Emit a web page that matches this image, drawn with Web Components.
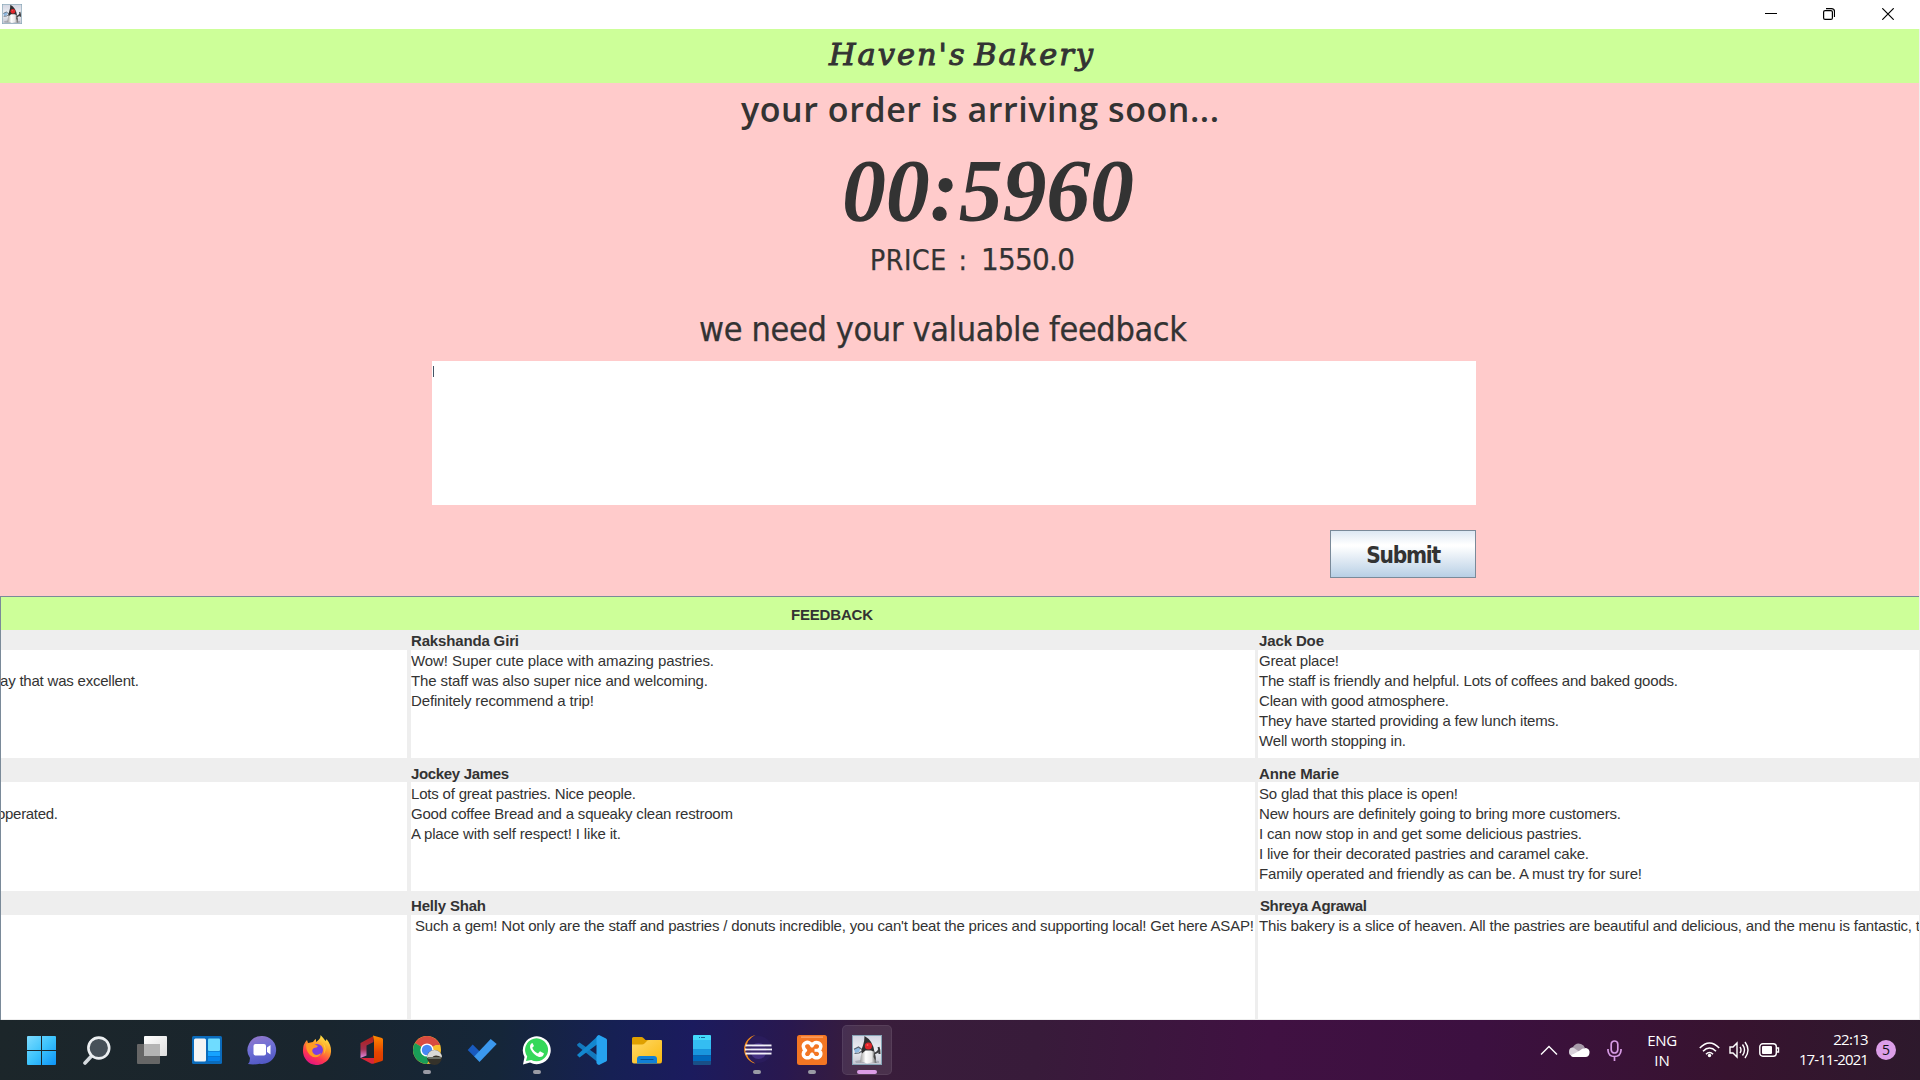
<!DOCTYPE html>
<html lang="en">
<head>
<meta charset="utf-8">
<title>Haven's Bakery</title>
<style>
html,body{margin:0;height:100%;overflow:hidden;background:#eee}
</style>
</head>
<body>
<bakery-desktop></bakery-desktop>
<script>
const define=(name,html,after)=>customElements.define(name,class extends HTMLElement{
  connectedCallback(){
    if(this.shadowRoot)return;
    const t=document.createElement('template');
    t.innerHTML=typeof html==='function'?html(this):html;
    this.attachShadow({mode:'open'}).append(t.content.cloneNode(true));
    if(after)after(this);
  }
});

/* Single line of text whose tracking is adjusted to the advance width in "w". */
define('fit-label',`<style>:host{display:block;white-space:pre;flex:none}span{display:inline-block}</style><span><slot></slot></span>`,el=>{
  const w=parseFloat(el.getAttribute('w'));
  if(!w)return;
  const s=el.shadowRoot.querySelector('span');
  const n=el.textContent.length;
  s.style.letterSpacing=((w-s.getBoundingClientRect().width)/(n-1))+'px';
});

const duke=`<defs><linearGradient id="dk" x1="0" y1="0" x2="0" y2="1"><stop offset="0" stop-color="#d3d6e2"/><stop offset=".5" stop-color="#eeeff4"/><stop offset="1" stop-color="#c3c6d2"/></linearGradient><linearGradient id="db" x1="0" y1="0" x2="1" y2="0"><stop offset="0" stop-color="#999"/><stop offset=".35" stop-color="#fff"/><stop offset=".7" stop-color="#e6e6e6"/><stop offset="1" stop-color="#555"/></linearGradient></defs>
<rect x=".5" y=".5" width="29" height="29" fill="url(#dk)" stroke="#86a5b6"/>
<path d="M3 26q11-3 24 0v2H4z" fill="#a9acb6"/>
<path d="M2 14l4.500-2 2 1.500-1.500 3.500-4 1z" fill="#8fb8e0"/><path d="M2 14.200l4.500-2.200 3.500 2.500M2.500 18.500l4.500-.5 3-2" fill="none" stroke="#5a6470" stroke-width="1.200"/>
<path d="M21 18.500q4.500 0 6-4M26.500 12l.8 3 .2 4" fill="none" stroke="#3a3a3d" stroke-width="2"/>
<path d="M8 27.500Q8.500 21 10.500 14h9.500q3.500 6 3.500 11.500l1 2.500-4.500-.5-5 1-4-1.500z" fill="url(#db)"/>
<path d="M12.500 1Q21 5.500 22.500 17L19 15.500h-5.500L10 18.500Q8.500 16 11 10.500 12.500 6 12.500 1z" fill="#303032"/>
<path d="M22 16q2.500 6 1.500 10l-2-4z" fill="#444"/>
<circle cx="16.400" cy="11" r="3.600" fill="#e0252a"/><circle cx="15.500" cy="9.900" r="1" fill="#f55"/>`;

const icons={
duke,
win:`<defs><linearGradient id="w" x1="0" y1="0" x2="1" y2="1"><stop offset="0" stop-color="#7edcff"/><stop offset=".5" stop-color="#3cc3fc"/><stop offset="1" stop-color="#0d94f7"/></linearGradient></defs><path d="M1 1h13v14H0V2q0-1 1-1zM15 1h13q1 0 1 1v13H15zM0 16h14v14H1q-1 0-1-1zM15 16h14v13q0 1-1 1H15z" fill="url(#w)"/>`,
search:`<path d="M10 20.500L3 28" stroke="#d5dade" stroke-width="3.600" stroke-linecap="round"/><circle cx="16.800" cy="13" r="10.400" fill="#475159" stroke="#eceff1" stroke-width="2.600"/>`,
tasks:`<defs><linearGradient id="t" x1="0" y1="0" x2="1" y2="1"><stop offset="0" stop-color="#fff"/><stop offset="1" stop-color="#ddd"/></linearGradient></defs><rect y="9" width="23" height="20" rx="1" fill="#666"/><rect x="7" y="1" width="23" height="20" rx="1" fill="url(#t)"/><path d="M7 9h16v12H8q-1 0-1-1z" fill="#b4b4b4"/>`,
widgets:`<rect y="1" width="30" height="28" rx="1.500" fill="#0b6bbb"/><rect x="2" y="3.500" width="12" height="23" rx="1.500" fill="#f4f4f4"/><rect x="16" y="3.500" width="12" height="12.500" rx="1" fill="#6fdcff"/><path d="M16 16.500h12V21H16z" fill="#16a3ff"/><path d="M16 21.500h12V25q0 1-1 1h-11z" fill="#0584ee"/>`,
chat:`<defs><linearGradient id="c" x1=".2" y1="0" x2=".5" y2="1"><stop offset="0" stop-color="#9377c9"/><stop offset=".45" stop-color="#6f70d6"/><stop offset="1" stop-color="#5158c4"/></linearGradient></defs><path d="M14.800 1a14 14 0 1 1-2 27.800Q6 30 1 29q2-2 2-6A14 14 0 0 1 14.800 1z" fill="url(#c)"/><rect x="6.500" y="9" width="12.500" height="11.500" rx="2" fill="#fff"/><path d="M20 12.500l3.500-2.500v9.500l-3.500-2.500z" fill="#fff"/>`,
firefox:`<defs><linearGradient id="f" x1=".8" y1="0" x2=".3" y2="1"><stop offset="0" stop-color="#fff04a"/><stop offset=".4" stop-color="#ff9a27"/><stop offset=".72" stop-color="#ff3750"/><stop offset="1" stop-color="#e01285"/></linearGradient></defs><path d="M18.500 0q3 3 5 6 1-1 1-2 5 6 4.500 13A14 14 0 1 1 1 15q0-6 4-10l1 3 5-1q2-3 3-3v3q5-3 4.500-7z" fill="url(#f)"/><circle cx="15" cy="15" r="6" fill="#7b3fe0"/><path d="M4 9q4-2 8 0l4 2q-1 2-4 2-3 2-1 5 3 4 8 0-1 5-8 4-7-3-7-13z" fill="#ff9b23"/><path d="M19.500 7q5 5 2 13 5-8-2-13z" fill="#ffd23b"/>`,
office:`<defs><linearGradient id="o" x1="0" y1="0" x2="0" y2="1"><stop offset="0" stop-color="#b31c13"/><stop offset=".6" stop-color="#a03150"/><stop offset="1" stop-color="#e38ce5"/></linearGradient><linearGradient id="o2" x1="0" y1="0" x2="0" y2="1"><stop offset="0" stop-color="#ff8a00"/><stop offset=".6" stop-color="#e44500"/><stop offset="1" stop-color="#d93a00"/></linearGradient></defs><path d="M3.500 8L16.500 1v6l-7 3.500v10L3.500 23z" fill="url(#o)"/><path d="M16 .5l9 2.500q1 .5 1 1.500v20q0 1-1 1.500l-8 2.500V6z" fill="url(#o2)"/><path d="M3.500 23h13.500v5.500q-1.500.5-3 0z" fill="#d92639"/>`,
chrome:`<g transform="translate(1)"><circle cx="14" cy="15" r="14" fill="#f9bd2d"/><path d="M14 15L1.900 8A14 14 0 0 1 26.100 8z" fill="#d94b40"/><path d="M1.900 8A14 14 0 0 0 14 29l6-10.500-6-3.500z" fill="#199d58"/><path d="M14 8h12.200l.7 2H14z" fill="#d94b40"/><circle cx="14" cy="15" r="6.600" fill="#fff"/><circle cx="14" cy="15" r="5.200" fill="#4688f4"/><circle cx="21.500" cy="22.500" r="7.500" fill="#35322a"/><path d="M14 22.500a7.500 7.500 0 0 1 15 0q-7-4-10 0-2 1-5 0z" fill="#d9dad8"/><path d="M14.500 22h14l-1 2h-12z" fill="#6d7168"/></g>`,
todo:`<g transform="translate(-.8)"><path d="M1.500 15l5-5.500 7 7-5 5.500z" fill="#195abf"/><path d="M8 21.500L24.500 4l6 5-17.200 18z" fill="#3b98ee"/></g>`,
whatsapp:`<path d="M1 29.500l1.500-7.500a14 14 0 1 1 5.500 5.500z" fill="#fff"/><path d="M4 26l1.200-4.500a11.500 11.500 0 1 1 4 3.500z" fill="#35d85a"/><path d="M10 8q-3 2-1.500 6 3 6 8.500 8 4 .5 5-3.500l-4-2.300-2 2.300q-4-1.500-5.700-5.700l1.700-1.800-1.600-3z" fill="#fff"/>`,
vscode:`<path d="M0 9.500L2.500 7.500 23 22v7L.5 11z" fill="#1379be"/><path d="M0 20L22 0v8L2.500 22.500z" fill="#1387cf"/><path d="M22 0l7 3.500q1 .5 1 1.500v20q0 1-1 1.500L22 30q-2-.5-2.500-2V2q.5-1.500 2.500-2z" fill="#26a2ef"/>`,
folder:`<defs><linearGradient id="fo" x1="0" y1="0" x2="1" y2="1"><stop offset="0" stop-color="#ffd968"/><stop offset="1" stop-color="#fab90e"/></linearGradient></defs><path d="M0 3.500Q0 2 1.500 2h8q1 0 2 1l2 2H27v6H0z" fill="#dfa000"/><path d="M0 9.500h10q1.500 0 2.500-1l2-2Q15 5 17 5h12q1 0 1 1v20q0 2.500-2 2.500H2q-2 0-2-2z" fill="url(#fo)"/><path d="M5 28.500V24q0-3 3-3h14q3 0 3 3v4.500z" fill="#1180d6"/><path d="M8.500 24.500h13" stroke="#074f91"/>`,
phone:`<path d="M6 1q0-1 1-1h16q1 0 1 1v5H6z" fill="#43d9fa"/><path d="M6 5h18v9H6z" fill="#34bdf2"/><path d="M6 14h18v6.500H6z" fill="#1996de"/><path d="M6 20.500h18V26H6z" fill="#0069bd"/><path d="M6 26h18v3q0 1-1 1H7q-1 0-1-1z" fill="#194f87"/><path d="M12 2.500h1M14 2.500h4" stroke="#176a98"/>`,
eclipse:`<circle cx="16.500" cy="14.500" r="13.500" fill="#2a1c5c"/><path d="M13.500 0A14.600 14.600 0 0 0 13.500 28.500 15.600 15.600 0 0 1 13.500 0z" fill="#f28b1d"/><circle cx="16.500" cy="16" r="8" fill="#453184"/><path d="M3.500 10.500h26M3 14.500H30M3.500 18.500h26" stroke="#f3f1f8" stroke-width="2"/><path d="M3.500 12.500h26M3.500 16.500h26" stroke="#392769" stroke-width="1.500"/>`,
xampp:`<rect width="30" height="30" rx="2.500" fill="#f37623"/><path d="M4 1.500h22v1.200H4z" fill="#ffab72"/><path d="M15 10.800C13.500 7.200 10.500 6.800 8.300 8 5.300 9.700 6 13.500 8.500 15.300 6 17 5.300 20.500 8.300 22.300c2.500 1.200 5.400.5 6.700-3.100 1.300 3.600 4.200 4.300 6.700 3.100 3-1.800 2.700-5.600-.2-7 2.900-1.800 3.200-5.600.2-7.300C19.500 6.800 16.500 7.200 15 10.800z" fill="none" stroke="#fff" stroke-width="3.500" stroke-linejoin="round"/><path d="M17.500 15.300h4" stroke="#fff" stroke-width="3"/>`
};
define('app-icon',el=>`<style>:host{display:block;flex:none;width:var(--size,30px);height:var(--size,30px)}svg{display:block;width:100%;height:100%}</style><svg viewBox="0 0 30 30">${icons[el.getAttribute('name')]}</svg>`);

define('title-bar',`<style>:host{display:flex;height:29px;background:#fff;align-items:flex-start;justify-content:space-between;box-sizing:border-box;padding:4px 26px 0 2px}
app-icon{--size:20px}svg{display:block}.c{display:flex;padding-top:4px}.c svg+svg{margin-left:46px}.c svg+svg+svg{margin-left:47px}</style>
<app-icon name="duke"></app-icon>
<div class="c"><svg width="12" height="12"><path d="M0 5.500h12" stroke="#000"/></svg>
<svg width="12" height="12" fill="none" stroke="#000" stroke-width="1.200"><rect x=".6" y="2.600" width="8.800" height="8.800" rx="1.500"/><path d="M3 .6h5.500a3 3 0 0 1 3 3V9"/></svg>
<svg width="12" height="12"><path d="M.3.300l11.400 11.400M11.700.3L.3 11.700" stroke="#000" stroke-width="1.200"/></svg></div>`);

define('order-panel',`<style>
:host{display:flex;flex-direction:column;height:567px;background:#ffcbcb;color:#333;margin-right:1px}
.row{display:flex;box-sizing:border-box;flex:none}
.brand{height:54px;background:#cdff99;padding:0 0 0 829px}
.brand fit-label{font:italic 400 30.500px/52px "Lucida Calligraphy","DejaVu Serif",serif;-webkit-text-stroke:1px #333;word-spacing:-4px}
.soon{height:60px;padding-left:741px;font:600 34px/52px "Open Sans",sans-serif}
.time{height:92px;padding-left:842px;font:italic 700 88px/95px "Liberation Serif",serif}
.price{height:70px;padding-left:870px;align-items:baseline;line-height:48px;font-family:"DejaVu Sans Condensed","DejaVu Sans",sans-serif;font-stretch:condensed}
.p1{font-size:28px;width:111px;word-spacing:3px}.p2{font-size:31px}
.p1,.p2,.ask{-webkit-text-stroke:.25px #333}
.ask{height:56px;padding-left:699px;font:34px/49px "DejaVu Sans Condensed","DejaVu Sans",sans-serif;font-stretch:condensed}
.box{margin-left:432px;width:1044px;height:144px;background:#fff;box-sizing:border-box;padding:5px 0 0 1px;flex:none}
.caret{width:1px;height:11px;background:#456}
.act{margin:25px 443px 0 0;justify-content:flex-end}
button{all:unset;display:flex;justify-content:center;box-sizing:border-box;width:146px;height:48px;border:1px solid #7a8a99;background:linear-gradient(#dde8f3,#fff 30%,#fff 33%,#b8cfe5);font:700 22.500px/48px "DejaVu Sans Condensed","DejaVu Sans",sans-serif;font-stretch:condensed}
</style>
<div class="row brand"><fit-label w="264">Haven's Bakery</fit-label></div>
<div class="row soon"><fit-label w="478">your order is arriving soon...</fit-label></div>
<div class="row time"><fit-label w="292">00:5960</fit-label></div>
<div class="row price"><fit-label class="p1" w="97">PRICE :</fit-label><fit-label class="p2" w="94">1550.0</fit-label></div>
<div class="row ask"><fit-label w="488">we need your valuable feedback</fit-label></div>
<div class="box"><div class="caret"></div></div>
<div class="row act"><button><fit-label w="75">Submit</fit-label></button></div>`);

/* name row + note area; lines arrive as slotted fit-labels */
define('review-cell',`<style>
:host{display:flex;flex-direction:column;overflow:hidden;font:15px/20px "Liberation Sans",Arial,sans-serif;color:#333}
.name{height:var(--head,24px);display:flex;align-items:flex-end;font-weight:700;box-sizing:border-box;flex:none}
.name ::slotted(*){height:var(--line,19px)}
.note{flex:1;background:#fff;padding-top:var(--top,1px);overflow:hidden}
.name,.note{padding-left:var(--left,0)}
</style><div class="name"><slot name="who"></slot></div><div class="note"><slot></slot></div>`);

const cell=(who,ww,lines,css='')=>`<review-cell style="${css}">${who?`<fit-label slot="who" w="${ww}">${who}</fit-label>`:''}${lines.map(([t,w,s])=>`<fit-label w="${w}" style="${s||''}">${t}</fit-label>`).join('')}</review-cell>`;
const rows=[
 [cell('',0,[['&nbsp;',0],['ay that was excellent.',139,'margin-left:-1px']]),
  cell('Rakshanda Giri',108,[['Wow! Super cute place with amazing pastries.',303],['The staff was also super nice and welcoming.',297],['Definitely recommend a trip!',183]]),
  cell('Jack Doe',65,[['Great place!',80],['The staff is friendly and helpful. Lots of coffees and baked goods.',419],['Clean with good atmosphere.',190],['They have started providing a few lunch items.',300],['Well worth stopping in.',147]],'--left:1px')],
 [cell('',0,[['&nbsp;',0],['operated.',61,'margin-left:-4px']]),
  cell('Jockey James',98,[['Lots of great pastries. Nice people.',225],['Good coffee Bread and a squeaky clean restroom',322],['A place with self respect! I like it.',210]]),
  cell('Anne Marie',80,[['So glad that this place is open!',199],['New hours are definitely going to bring more customers.',362],['I can now stop in and get some delicious pastries.',323],['I live for their decorated pastries and caramel cake.',330],['Family operated and friendly as can be. A must try for sure!',383]],'--left:1px')],
 [cell('',0,[]),
  cell('Helly Shah',75,[["Such a gem! Not only are the staff and pastries / donuts incredible, you can't beat the prices and supporting local! Get here ASAP!",839,'margin-left:4px']]),
  cell('<span style="margin-left:1px">Shreya Agrawal</span>',108,[['This bakery is a slice of heaven. All the pastries are beautiful and delicious, and the menu is fantastic, t',661]],'--left:1px')]
];
define('feedback-table',`<style>
:host{display:block;height:424px;box-sizing:border-box;border:solid #7a8a99;border-width:1px 0 0 1px;background:#eee;margin-right:1px}
.head{height:33px;background:#cdff99;padding-left:790px;color:#333;font:700 15px/35px "Liberation Sans",Arial,sans-serif;box-sizing:border-box}
.r{display:grid;grid-template-columns:406px 4px 844px 3px 661px}
</style>
<div class="head"><fit-label w="82">FEEDBACK</fit-label></div>
${rows.map((r,i)=>`<div class="r" style="height:${[128,133,128][i]}px;--head:${i?24:20}px;--line:${i==1?18:19}px;--top:${i==1?2:1}px">${r[0]}<i></i>${r[1]}<i></i>${r[2]}</div>`).join('')}`);

define('task-item',el=>`<style>:host{display:grid;width:55px;height:60px;place-items:center;position:relative;flex:none}
.b{grid-area:1/1;width:50px;height:50px;border-radius:5px;box-sizing:border-box;border:1px solid transparent}
app-icon{grid-area:1/1}
:host([state=active]) .b{background:rgba(255,255,255,.09);border-color:rgba(255,255,255,.07)}
i{position:absolute;bottom:6px;height:4px;border-radius:2px;width:8px;background:#9a9ba5}
:host([state=active]) i{width:20px;background:#db9ce6}</style>
<div class="b"></div><app-icon name="${el.getAttribute('name')}"></app-icon>${el.hasAttribute('state')?'<i></i>':''}`);

define('system-tray',`<style>
:host{display:flex;align-items:center;height:60px;color:#fff;font:15px/20px "Open Sans","Noto Sans",sans-serif}
svg{display:block;flex:none;fill:none;stroke:#fff;stroke-width:1.400}
.t{display:flex;flex-direction:column;height:40px}
.badge{width:20px;height:20px;border-radius:50%;background:#dc9ee8;color:#111;display:flex;justify-content:center;font-size:14px;line-height:20px}
</style>
<svg width="18" height="12"><path d="M1 10.500l8-8 8 8"/></svg>
<svg style="margin-left:11px;stroke:none" width="21" height="14"><path d="M2 9Q-1 5 4 4 7-1 12 1q3 1 4 4l-7 5z" fill="#a79aa9"/><path d="M0 9q0-5 5-4l7 5-8 3Q0 13 0 9z" fill="#d8d1da"/><path d="M2 12q3-1 8-4 3-3 7-3 4 1 3.500 5-.5 4-4 4H4q-2 0-2-2z" fill="#fff"/></svg>
<svg style="margin-left:17px;stroke:#d79be4;stroke-width:1.700" width="15" height="21"><rect x="4.200" y="1" width="6.600" height="12" rx="3.300"/><path d="M1 9v1.500q.5 6 6.500 6t6.500-6V9M7.500 17v4"/></svg>
<div class="t" style="margin-left:25px;width:30px;align-items:center;padding-bottom:1px"><fit-label w="30">ENG</fit-label><fit-label w="15.500">IN</fit-label></div>
<svg style="margin-left:22px;stroke-width:1.600" width="21" height="16"><path d="M.8 6Q10.500-4 20.200 6M4 9.200q6.500-6.500 13 0M7 12.200q3.500-3.500 7 0"/><circle cx="10.500" cy="13.500" r="1.700" fill="#fff" stroke="none"/></svg>
<svg style="margin-left:9px" width="21" height="18"><path d="M1 6h3l4-4v14l-4-4H1zM11 6q2 3 0 6M13.500 3.500q4 5.500 0 11M16 1q6 8 0 16"/></svg>
<svg style="margin-left:9px" width="21" height="14"><rect x=".8" y=".8" width="16.500" height="12.400" rx="3"/><rect x="3" y="3" width="10" height="8" rx="1" fill="#fff" stroke="none"/><path d="M18 5h1.500v4H18"/></svg>
<div class="t" style="margin-left:18px;width:70px;align-items:flex-end;padding-bottom:2px"><fit-label w="35.500">22:13</fit-label><fit-label w="70">17-11-2021</fit-label></div>
<div class="badge" style="margin-left:8px">5</div>`);

define('task-bar',`<style>:host{display:flex;justify-content:space-between;height:60px;box-sizing:border-box;padding:0 24px 0 14.500px;background:linear-gradient(95deg,#1c262a 0%,#19252e 17%,#152639 26%,#162054 32%,#1b1b5e 36%,#29184f 41%,#391d3b 45%,#381b3a 54%,#401142 66%,#3c1040 77%,#37132f 90%,#2d192c 100%)}nav{display:flex}</style>
<nav>${['win','search','tasks','widgets','chat','firefox','office','chrome:run','todo','whatsapp:run','vscode','folder','phone','eclipse:run','xampp:run','duke:active'].map(s=>{const[n,t]=s.split(':');return `<task-item name="${n}"${t?` state="${t}"`:''}></task-item>`}).join('')}</nav><system-tray></system-tray>`);

define('bakery-desktop',`<style>:host{display:flex;flex-direction:column;width:1920px;height:1080px;overflow:hidden;background:#eee}</style>
<title-bar></title-bar><order-panel></order-panel><feedback-table></feedback-table><task-bar></task-bar>`);
</script>
</body>
</html>
